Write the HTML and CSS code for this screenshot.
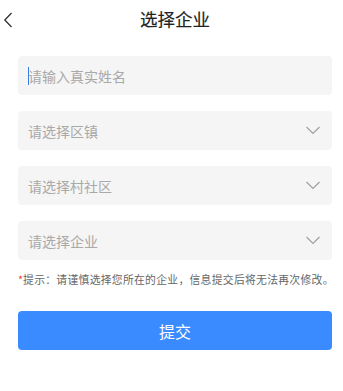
FILE: index.html
```html
<!DOCTYPE html>
<html lang="zh">
<head>
<meta charset="utf-8">
<title>选择企业</title>
<link rel="stylesheet" href="styles.css">
</head>
<body>
<header class="header">
  <a class="back" aria-label="返回">
    <svg width="10" height="16" viewBox="0 0 10 16"><path d="M8.5 1 L1.8 8 L8.5 15" fill="none" stroke="#333" stroke-width="1.3"/></svg>
  </a>
  <h1 class="title">选择企业</h1>
</header>
<main class="form">
  <div class="field"><span class="caret"></span><span class="ph">请输入真实姓名</span></div>
  <div class="field select"><span class="ph">请选择区镇</span><svg class="arrow" width="16" height="9" viewBox="0 0 16 9"><path d="M1.5 1 L8 7.5 L14.5 1" fill="none" stroke="#a0a0a0" stroke-width="1.2"/></svg></div>
  <div class="field select"><span class="ph">请选择村社区</span><svg class="arrow" width="16" height="9" viewBox="0 0 16 9"><path d="M1.5 1 L8 7.5 L14.5 1" fill="none" stroke="#a0a0a0" stroke-width="1.2"/></svg></div>
  <div class="field select"><span class="ph">请选择企业</span><svg class="arrow" width="16" height="9" viewBox="0 0 16 9"><path d="M1.5 1 L8 7.5 L14.5 1" fill="none" stroke="#a0a0a0" stroke-width="1.2"/></svg></div>
  <p class="hint"><span class="star">*</span>提示：请谨慎选择您所在的企业，信息提交后将无法再次修改。</p>
  <button class="submit">提交</button>
</main>
</body>
</html>
```
FILE: styles.css
```css
* { box-sizing: border-box; }
html, body { margin: 0; padding: 0; background: #fff; }
body {
  font-family: "Noto Sans CJK SC", "Noto Sans", sans-serif;
  color: #333;
  width: 343px;
}
.header {
  position: relative;
  height: 38px;
  padding: 0 11px 0 18px;
  display: flex;
  align-items: center;
  justify-content: center;
}
.back {
  position: absolute;
  left: 3px;
  top: 12px;
  display: block;
  line-height: 0;
}
.title {
  margin: 0;
  font-size: 17.5px;
  font-weight: 400;
  color: #222;
  line-height: 1;
  -webkit-text-stroke: 0.15px #222;
}
.form {
  padding: 18px 11px 0 18px;
  display: flex;
  flex-direction: column;
}
.field {
  height: 39px;
  background: #f5f5f5;
  border-radius: 4px;
  display: flex;
  align-items: center;
  padding: 0 10px;
  margin-bottom: 16px;
}
.field.select { justify-content: space-between; }
.caret {
  width: 1px;
  height: 18px;
  background: #3a7bea;
  margin-right: -1px;
}
.ph {
  font-size: 14px;
  color: #a9a9a9;
  line-height: 1;
}
.arrow { margin-right: 1px; }
.hint {
  margin: -4px 0 0 0;
  font-size: 10.8px;
  letter-spacing: 0.3px;
  line-height: 14px;
  color: #666;
  white-space: nowrap;
}
.star { color: #f03c3c; letter-spacing: 0; }
.submit {
  margin-top: 25px;
  height: 39px;
  border: 0;
  border-radius: 4px;
  background: #3a8bff;
  color: #fff;
  font-family: inherit;
  font-size: 16px;
  padding: 0;
}
```
